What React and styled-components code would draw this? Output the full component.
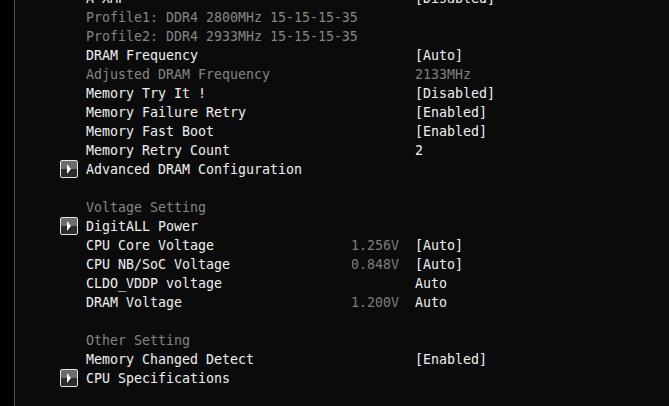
import React from "react";
import styled, { createGlobalStyle } from "styled-components";

const Global = createGlobalStyle`
  html, body { margin: 0; padding: 0; background: #000; }
  body { width: 669px; height: 406px; overflow: hidden; }
`;

const Screen = styled.div`
  display: flex;
  width: 669px;
  height: 406px;
  overflow: hidden;
  background: #000;
  font-family: "DejaVu Sans Mono", "Liberation Mono", monospace;
  font-size: 13.29px;
  line-height: 19px;
`;

const Gutter = styled.div`
  width: 14px;
  flex: none;
  background: #000;
  border-right: 1px solid #505050;
`;

const Panel = styled.div`
  flex: 1;
  background: #0b0b0b;
  padding: 0 0 0 45px;
  overflow: hidden;
`;

const List = styled.div`
  display: flex;
  flex-direction: column;
  margin-top: -11.5px;
`;

const Row = styled.div`
  display: grid;
  grid-template-columns: 26px 265px 48px 16px auto;
  align-items: center;
  height: 19px;
  white-space: nowrap;
`;

const IconCell = styled.div`
  display: flex;
  align-items: center;
`;

const Label = styled.span`
  grid-column: 2;
  color: ${(p) => (p.$dim ? "#858585" : "#f0f0f0")};
  overflow: visible;
`;

const Reading = styled.span`
  grid-column: 3;
  text-align: right;
  color: #7e7e7e;
`;

const Value = styled.span`
  grid-column: 5;
  color: ${(p) => (p.$dim ? "#808080" : "#f0f0f0")};
`;

const SubMenuIcon = styled.div`
  position: relative;
  width: 18px;
  height: 18px;
  box-sizing: border-box;
  border: 1px solid #e6e6e6;
  border-radius: 2px;
  background: linear-gradient(#6c6c6c 0 50%, #2c2c2c 50% 100%);
  &::after {
    content: "";
    position: absolute;
    left: 6px;
    top: 3px;
    border-left: 4px solid #fff;
    border-top: 5px solid transparent;
    border-bottom: 5px solid transparent;
  }
`;

const rows = [
  { label: "A-XMP", value: "[Disabled]" },
  { label: "Profile1: DDR4 2800MHz 15-15-15-35", dim: true },
  { label: "Profile2: DDR4 2933MHz 15-15-15-35", dim: true },
  { label: "DRAM Frequency", value: "[Auto]" },
  { label: "Adjusted DRAM Frequency", dim: true, value: "2133MHz", valueDim: true },
  { label: "Memory Try It !", value: "[Disabled]" },
  { label: "Memory Failure Retry", value: "[Enabled]" },
  { label: "Memory Fast Boot", value: "[Enabled]" },
  { label: "Memory Retry Count", value: "2" },
  { label: "Advanced DRAM Configuration", sub: true },
  { blank: true },
  { label: "Voltage Setting", dim: true },
  { label: "DigitALL Power", sub: true },
  { label: "CPU Core Voltage", reading: "1.256V", value: "[Auto]" },
  { label: "CPU NB/SoC Voltage", reading: "0.848V", value: "[Auto]" },
  { label: "CLDO_VDDP voltage", value: "Auto" },
  { label: "DRAM Voltage", reading: "1.200V", value: "Auto" },
  { blank: true },
  { label: "Other Setting", dim: true },
  { label: "Memory Changed Detect", value: "[Enabled]" },
  { label: "CPU Specifications", sub: true },
];

export default function App() {
  return (
    <>
      <Global />
      <Screen>
        <Gutter />
        <Panel>
          <List>
            {rows.map((r, i) =>
              r.blank ? (
                <Row key={i} />
              ) : (
                <Row key={i}>
                  {r.sub && (
                    <IconCell>
                      <SubMenuIcon />
                    </IconCell>
                  )}
                  <Label $dim={r.dim}>{r.label}</Label>
                  {r.reading && <Reading>{r.reading}</Reading>}
                  {r.value && <Value $dim={r.valueDim}>{r.value}</Value>}
                </Row>
              )
            )}
          </List>
        </Panel>
      </Screen>
    </>
  );
}
